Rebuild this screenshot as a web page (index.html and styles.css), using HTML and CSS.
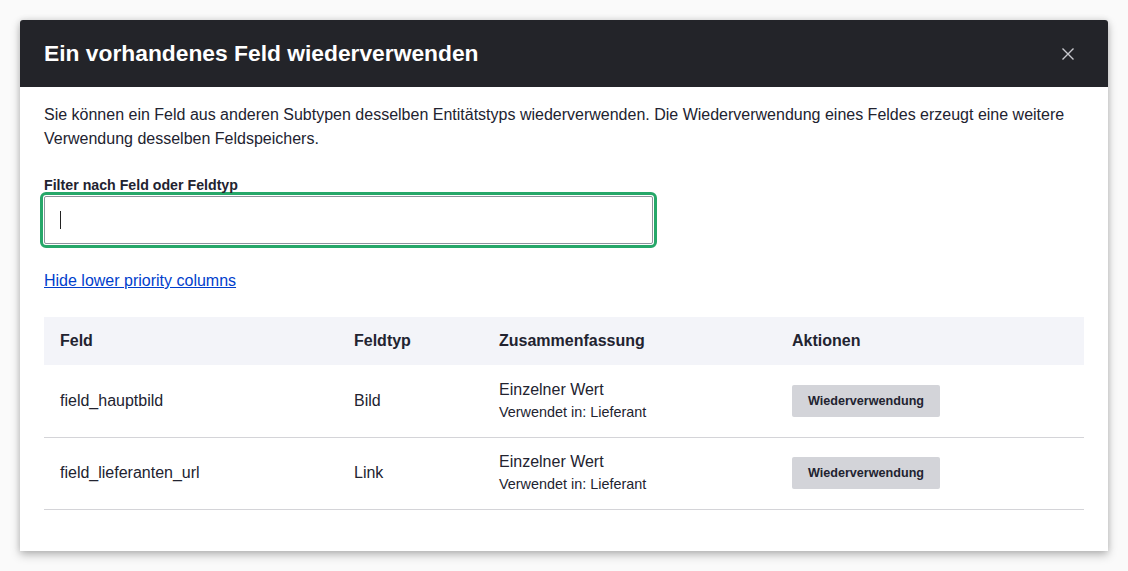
FILE: index.html
```html
<!DOCTYPE html>
<html lang="de">
<head>
<meta charset="utf-8">
<title>Dialog</title>
<link rel="stylesheet" href="styles.css">
</head>
<body>
<div class="overlay">
  <div class="dialog" role="dialog">
    <div class="dialog-header">
      <h2 class="dialog-title">Ein vorhandenes Feld wiederverwenden</h2>
      <button class="close" aria-label="Schließen">
        <svg width="12" height="12" viewBox="0 0 12 12"><path d="M0.5 0.5 L11.5 11.5 M11.5 0.5 L0.5 11.5" stroke="#c8c9ce" stroke-width="1.4" fill="none"/></svg>
      </button>
    </div>
    <div class="dialog-body">
      <p class="intro">Sie können ein Feld aus anderen Subtypen desselben Entitätstyps wiederverwenden. Die Wiederverwendung eines Feldes erzeugt eine weitere Verwendung desselben Feldspeichers.</p>
      <div class="field">
        <label class="label">Filter nach Feld oder Feldtyp</label>
        <div class="focus-ring"><div class="input"><span class="caret"></span></div></div>
      </div>
      <a class="toggle" href="#">Hide lower priority columns</a>
      <table class="table">
        <thead>
          <tr><th class="c1">Feld</th><th class="c2">Feldtyp</th><th class="c3">Zusammenfassung</th><th class="c4">Aktionen</th></tr>
        </thead>
        <tbody>
          <tr>
            <td>field_hauptbild</td>
            <td>Bild</td>
            <td><div class="sum">Einzelner Wert</div><div class="used">Verwendet in: Lieferant</div></td>
            <td><button class="btn">Wiederverwendung</button></td>
          </tr>
          <tr>
            <td>field_lieferanten_url</td>
            <td>Link</td>
            <td><div class="sum">Einzelner Wert</div><div class="used">Verwendet in: Lieferant</div></td>
            <td><button class="btn">Wiederverwendung</button></td>
          </tr>
        </tbody>
      </table>
    </div>
  </div>
</div>
</body>
</html>
```
FILE: styles.css
```css
* { box-sizing: border-box; }
html, body { margin: 0; padding: 0; }
body {
  background: #fafafa;
  font-family: "Liberation Sans", Arial, sans-serif;
  color: #222330;
  width: 1128px;
  height: 571px;
  overflow: hidden;
}
.overlay {
  padding: 20px;
}
.dialog {
  width: 1088px;
  height: 531px;
  background: #fff;
  border-radius: 3px 3px 0 0;
  box-shadow: 0 4px 10px rgba(0,0,0,0.25), 0 0 6px rgba(0,0,0,0.12);
  overflow: hidden;
}
.dialog-header {
  height: 67px;
  background: #232429;
  display: flex;
  align-items: center;
  justify-content: space-between;
  padding: 0 24px;
}
.dialog-title {
  margin: 0;
  color: #fff;
  font-size: 22.8px;
  font-weight: 700;
  position: relative;
  top: 0;
}
.close {
  background: none;
  border: 0;
  padding: 0;
  width: 24px;
  height: 24px;
  display: flex;
  align-items: center;
  justify-content: center;
  margin-right: 4px;
}
.dialog-body {
  padding: 16px 24px 40px;
}
.intro {
  margin: 0;
  font-size: 16px;
  line-height: 24px;
  color: #222330;
}
.field {
  margin-top: 25px;
}
.label {
  display: block;
  font-size: 14.2px;
  font-weight: 700;
  line-height: 18px;
}
.focus-ring {
  margin-left: -4px;
  margin-top: -2px;
  width: 617px;
  height: 56px;
  border: 3px solid #26a769;
  border-radius: 6px;
  padding: 1px;
}
.input {
  width: 609px;
  height: 48px;
  border: 1px solid #8e929c;
  border-radius: 2px;
  display: flex;
  align-items: center;
  padding-left: 15px;
}
.caret {
  display: block;
  width: 1px;
  height: 18px;
  background: #222;
}
.toggle {
  display: inline-block;
  margin-top: 24px;
  font-size: 16px;
  line-height: 18px;
  color: #003ecc;
  text-decoration: underline;
}
.table {
  margin-top: 27px;
  width: 1040px;
  border-collapse: collapse;
  font-size: 16px;
}
.table th {
  background: #f3f4f9;
  text-align: left;
  font-weight: 700;
  height: 48px;
  padding: 0 16px;
  color: #222330;
}
.c1 { width: 294px; }
.c2 { width: 145px; }
.c3 { width: 293px; }
.c4 { width: 308px; }
.table td {
  height: 72px;
  padding: 0 16px;
  border-bottom: 1px solid #d4d4d8;
  vertical-align: middle;
  color: #222330;
}
.sum {
  font-size: 16px;
  line-height: 20px;
}
.used {
  font-size: 14.4px;
  line-height: 20px;
  margin-top: 2px;
}
.btn {
  height: 32px;
  width: 148px;
  background: #d3d4d9;
  border: 0;
  border-radius: 2px;
  font-family: "Liberation Sans", Arial, sans-serif;
  font-weight: 700;
  font-size: 12.6px;
  color: #222330;
  padding: 0;
}
```
